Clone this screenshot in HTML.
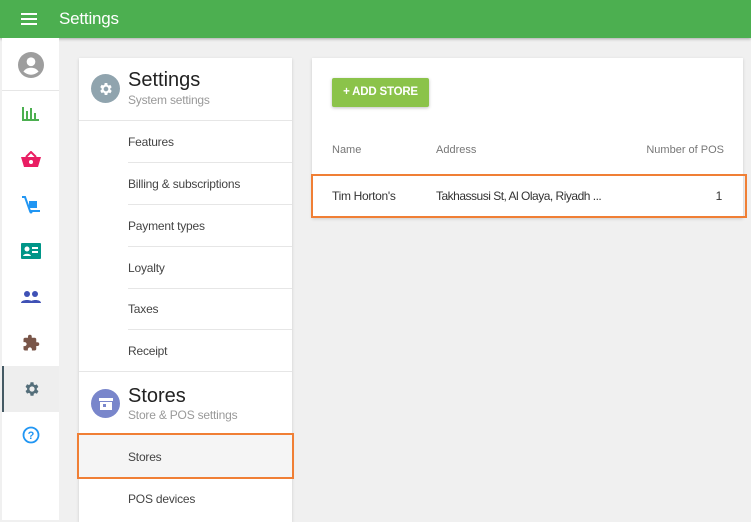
<!DOCTYPE html>
<html><head><style>
*{box-sizing:border-box;margin:0;padding:0}
body{width:751px;height:522px;background:#f0f0f0;font-family:"Liberation Sans",sans-serif;position:relative;overflow:hidden;color:#333}
.top{position:absolute;left:0;top:0;width:751px;height:38px;background:#4caf50;box-shadow:0 1px 3px rgba(0,0,0,.3)}
.top span{position:absolute;left:59px;top:9px;color:#fff;font-size:17px;letter-spacing:-0.2px}
.side{position:absolute;left:2px;top:38px;width:57px;height:482px;background:#fff}
.ic{position:absolute;left:0;width:57px;height:46px;display:flex;align-items:center;justify-content:center}
.card{position:absolute;background:#fff;box-shadow:0 1px 3px rgba(0,0,0,.15)}
.item{position:absolute;left:49px;font-size:12px;color:#444;letter-spacing:-0.2px}
.div{position:absolute;left:49px;right:0;height:1px;background:#e6e6e6}
.hdr{position:absolute;left:49px;font-size:20px;color:#222}
.sub{position:absolute;left:49px;font-size:12px;color:#999;letter-spacing:-0.2px}
.circ{position:absolute;left:12px;width:29px;height:29px;border-radius:50%;display:flex;align-items:center;justify-content:center}
.th{position:absolute;top:86px;font-size:11px;color:#777}
.td{position:absolute;top:131px;font-size:12px;color:#333;letter-spacing:-0.3px}
</style></head><body>
<div class="top">
<svg style="position:absolute;left:21px;top:12px" width="16" height="14"><rect y="1" width="16" height="2" fill="#fff"/><rect y="6" width="16" height="2" fill="#fff"/><rect y="11" width="16" height="2" fill="#fff"/></svg>
<span>Settings</span></div>
<div class="side">
<div class="ic" style="top:4px;height:46px"><svg width="26" height="26" viewBox="0 0 24 24"><circle cx="12" cy="12" r="12" fill="#9e9e9e"/><circle cx="12" cy="9" r="4" fill="#fff"/><path d="M5 18c2-3 5-3.5 7-3.5s5 .5 7 3.5c-2 2-4.5 3-7 3s-5-1-7-3z" fill="#fff"/></svg></div>
<div style="position:absolute;left:0;top:52px;width:57px;height:1px;background:#e6e6e6"></div>
<div class="ic" style="top:52px"><svg width="18" height="16"><path d="M1 2v13h16" stroke="#4caf50" stroke-width="2" fill="none"/><rect x="4" y="6" width="2" height="8" fill="#4caf50"/><rect x="8" y="3" width="2" height="11" fill="#4caf50"/><rect x="12" y="8" width="2" height="6" fill="#4caf50"/></svg></div>
<div class="ic" style="top:98px"><svg width="20" height="16"><path d="M0 6h20l-3 10H3z" fill="#e91e63"/><path d="M5 6l5-5 5 5" stroke="#e91e63" stroke-width="2" fill="none"/><circle cx="10" cy="11" r="2" fill="#fff"/></svg></div>
<div class="ic" style="top:144px"><svg width="20" height="18"><path d="M1 1h3l5 14h10" stroke="#2196f3" stroke-width="2" fill="none"/><rect x="8" y="5" width="8" height="7" fill="#2196f3"/><circle cx="10" cy="16" r="1.5" fill="#2196f3"/></svg></div>
<div class="ic" style="top:190px"><svg width="20" height="16"><rect width="20" height="16" rx="1" fill="#009688"/><circle cx="6" cy="6" r="2.5" fill="#fff"/><path d="M2 13c1-3 7-3 8 0z" fill="#fff"/><rect x="11" y="4" width="6" height="2" fill="#fff"/><rect x="11" y="8" width="6" height="2" fill="#fff"/></svg></div>
<div class="ic" style="top:236px"><svg width="20" height="12"><circle cx="6" cy="3" r="3" fill="#3f51b5"/><circle cx="14" cy="3" r="3" fill="#3f51b5"/><path d="M0 12c0-4 12-4 12 0zM9 12c0-4 11-4 11 0z" fill="#3f51b5"/></svg></div>
<div class="ic" style="top:282px"><svg width="18" height="18" viewBox="0 0 24 24"><path d="M20.5 11H19V7c0-1.1-.9-2-2-2h-4V3.5a2.5 2.5 0 0 0-5 0V5H4c-1.1 0-2 .9-2 2v3.8h1.5c1.5 0 2.7 1.2 2.7 2.7S5 16.2 3.5 16.2H2V20c0 1.1.9 2 2 2h3.8v-1.5c0-1.5 1.2-2.7 2.7-2.7s2.700 1.2 2.7 2.7V22H17c1.1 0 2-.9 2-2v-4h1.5a2.5 2.5 0 0 0 0-5z" fill="#795548"/></svg></div>
<div class="ic" style="top:328px;background:#eee;border-left:2px solid #455a64"><svg width="18" height="18" viewBox="0 0 24 24"><path d="M19.4 13a7.5 7.5 0 0 0 0-2l2.1-1.6-2-3.5-2.5 1a7 7 0 0 0-1.7-1L15 3h-4l-.4 2.7a7 7 0 0 0-1.7 1l-2.5-1-2 3.5L6.5 11a7.5 7.5 0 0 0 0 2l-2.1 1.6 2 3.5 2.5-1a7 7 0 0 0 1.7 1L11 21h4l.4-2.7a7 7 0 0 0 1.7-1l2.5 1 2-3.5zM13 15.5a3.5 3.5 0 1 1 0-7 3.5 3.5 0 0 1 0 7z" fill="#546e7a" transform="translate(-1 0)"/></svg></div>
<div class="ic" style="top:374px"><svg width="18" height="18"><circle cx="9" cy="9" r="7.5" stroke="#2196f3" stroke-width="1.8" fill="none"/><text x="9" y="13" font-size="11" font-family="Liberation Sans" fill="#2196f3" text-anchor="middle" font-weight="bold">?</text></svg></div>
</div>

<div class="card" style="left:79px;top:58px;width:213px;height:464px">
<div class="circ" style="top:16px;background:#90a4ae"><svg width="16" height="16" viewBox="0 0 24 24"><path d="M19.4 13a7.5 7.5 0 0 0 0-2l2.1-1.6-2-3.5-2.5 1a7 7 0 0 0-1.7-1L15 3h-4l-.4 2.7a7 7 0 0 0-1.7 1l-2.5-1-2 3.5L6.5 11a7.5 7.5 0 0 0 0 2l-2.1 1.6 2 3.5 2.5-1a7 7 0 0 0 1.7 1L11 21h4l.4-2.7a7 7 0 0 0 1.7-1l2.5 1 2-3.5zM13 15.5a3.5 3.5 0 1 1 0-7 3.5 3.5 0 0 1 0 7z" fill="#fff" transform="translate(-1 0)"/></svg></div>
<div class="hdr" style="top:11px">Settings</div>
<div class="sub" style="top:35px">System settings</div>
<div style="position:absolute;left:0;right:0;top:62px;height:1px;background:#e6e6e6"></div>
<div class="item" style="top:77px">Features</div><div class="div" style="top:104px"></div>
<div class="item" style="top:119px">Billing &amp; subscriptions</div><div class="div" style="top:146px"></div>
<div class="item" style="top:161px">Payment types</div><div class="div" style="top:188px"></div>
<div class="item" style="top:203px">Loyalty</div><div class="div" style="top:230px"></div>
<div class="item" style="top:244px">Taxes</div><div class="div" style="top:271px"></div>
<div class="item" style="top:286px">Receipt</div>
<div style="position:absolute;left:0;right:0;top:313px;height:1px;background:#e6e6e6"></div>
<div class="circ" style="top:331px;background:#7986cb"><svg width="14" height="12"><rect x="0" y="0" width="14" height="3" fill="#fff"/><rect x="1" y="4" width="12" height="8" fill="#fff"/><rect x="4" y="6" width="3" height="3" fill="#7986cb"/></svg></div>
<div class="hdr" style="top:327px">Stores</div>
<div class="sub" style="top:350px">Store &amp; POS settings</div>
<div style="position:absolute;left:0;right:0;top:377px;height:43px;background:#f5f5f5"></div>
<div class="item" style="top:392px">Stores</div>
<div class="item" style="top:434px">POS devices</div>
</div>
<div style="position:absolute;left:77px;top:433px;width:217px;height:46px;border:2px solid #f07f35"></div>

<div class="card" style="left:312px;top:58px;width:431px;height:160px">
<div style="position:absolute;left:20px;top:20px;width:97px;height:29px;background:#8bc34a;border-radius:2px;box-shadow:0 1px 3px rgba(0,0,0,.25);color:#fff;font-size:11.5px;font-weight:bold;text-align:center;line-height:29px;letter-spacing:-0.2px">+ ADD STORE</div>
<div class="th" style="left:20px">Name</div>
<div class="th" style="left:124px">Address</div>
<div class="th" style="right:19px">Number of POS</div>
<div class="td" style="left:20px">Tim Horton's</div>
<div class="td" style="left:124px;top:131px;font-size:12px;letter-spacing:-0.5px">Takhassusi St, Al Olaya, Riyadh ...</div>
<div class="td" style="right:21px">1</div>
</div>
<div style="position:absolute;left:311px;top:174px;width:436px;height:44px;border:2px solid #f07f35"></div>
</body></html>
